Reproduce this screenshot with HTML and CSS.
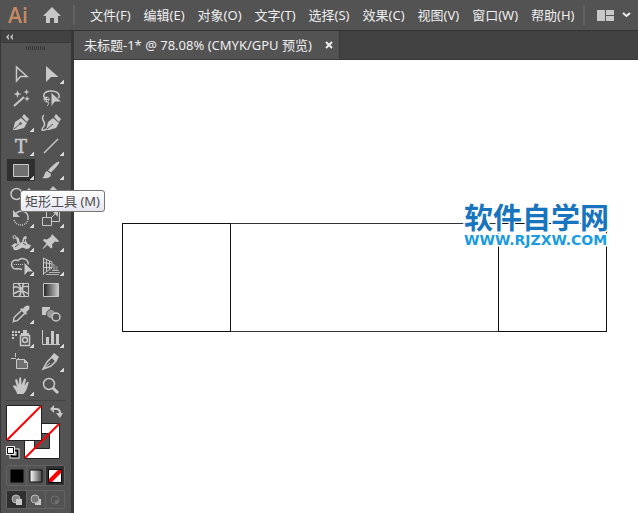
FILE: index.html
```html
<!DOCTYPE html>
<html lang="zh-CN">
<head>
<meta charset="utf-8">
<title>未标题-1</title>
<link rel="stylesheet" href="styles.css">
</head>
<body>
<header class="menubar">
  <span class="brand">Ai</span>
  <button class="home" aria-label="主页"><svg width="18" height="16" viewBox="0 0 18 16"><path class="f" d="M9 0 0 9h3v7h4v-5h4v5h4V9h3Z"/></svg></button>
  <nav class="menus">
    <button>文件(F)</button><button>编辑(E)</button><button>对象(O)</button><button>文字(T)</button><button>选择(S)</button><button>效果(C)</button><button>视图(V)</button><button>窗口(W)</button><button>帮助(H)</button>
  </nav>
  <button class="workspace" aria-label="排列文档"><svg width="35" height="12" viewBox="0 0 35 12"><path class="f" d="M0 1h8v11H0zM9 1h8v5H9zM9 7h8v5H9z"/><path d="m26 4 3.500 3L33 4" fill="none" stroke="#eee" stroke-width="2"/></svg></button>
</header>
<div class="body">
  <aside class="panel">
    <button class="collapse" aria-label="折叠"><svg width="8" height="6" viewBox="0 0 8 6"><path class="f" d="M3 0v2L2 3l1 1v2L0 3ZM7 0v2L6 3l1 1v2L4 3Z"/></svg></button>
    <div class="grip"></div>
    <div class="tools">
      <button aria-label="选择"><svg viewBox="0 0 30 24"><path class="s w15" d="M10.500 5v14l4-4.500h6.500Z"/></svg></button>
      <button class="more" aria-label="直接选择"><svg viewBox="0 0 30 24"><path class="f" d="M10 4v16l5-5h7.500Z"/></svg></button>
      <button aria-label="魔棒"><svg viewBox="0 0 30 24"><path class="s w2" d="m8 20 10-9"/><path class="f" d="m11.500 4 1 3 3 1-3 1-1 3-1-3-3-1 3-1zM20.500 3l.8 2.200 2.200.8-2.200.8-.8 2.200-.8-2.200-2.200-.8 2.200-.8zM21 10l.8 2 2.200.8-2.200.8-.8 2.200-.8-2.200-2-.8 2-.8z"/></svg></button>
      <button aria-label="套索"><svg viewBox="0 0 30 24"><path class="s w15" d="M11 14c-6-4-3-9 4-9s10 4 7 8"/><path class="s" d="M10.500 11a2.500 2.500 0 1 0 .1 0M10.500 11v5M8 13.500h5M12 16c1 2 0 3-1 4"/><path class="f edge" d="M15 6v15l4-5h7Z"/></svg></button>
      <button class="more" aria-label="钢笔"><svg viewBox="0 0 30 24"><path class="f" d="m7 20 2-8 6-4 6 5-3 5-8 2ZM16 7l2-3 5 5-2 3Z"/><path class="d" d="m8 19 6-5"/><circle class="hole" cx="14.500" cy="13.500" r="1.200"/></svg></button>
      <button aria-label="曲率"><svg viewBox="0 0 30 24"><path class="f" d="m10 20 2-8 5-4 6 5-3 5-7 2ZM18 7l2-3 5 5-2 3Z"/><path class="d" d="m11 19 6-5"/><path class="s w15" d="M8 5c-5 4 3 7 0 11-1 2-2 2-2 4 2 1 3 0 4-1"/></svg></button>
      <button class="more" aria-label="文字"><svg viewBox="0 0 30 24"><text x="15" y="19" text-anchor="middle" class="type">T</text></svg></button>
      <button class="more" aria-label="直线段"><svg viewBox="0 0 30 24"><path class="s w15" d="M8 19 22 5"/></svg></button>
      <button class="more selected" aria-label="矩形工具" aria-describedby="tip"><svg viewBox="0 0 30 24"><path class="plate" d="M7.500 6.500h15v12h-15z"/></svg><span class="tip" id="tip" role="tooltip">矩形工具 (M)</span></button>
      <button class="more" aria-label="画笔"><svg viewBox="0 0 30 24"><path class="f" d="M23 3.500c2 1-5 8-8 11l-3-2c3-4 9-9 11-9ZM11 13l4 3c0 4-4 5-9 4 3-1 2-6 5-7Z"/></svg></button>
      <button class="more" aria-label="Shaper"><svg viewBox="0 0 30 24"><circle class="s w15" cx="10.500" cy="12" r="5.500"/><path class="f" d="m15 14 8-8 2 2-8 8Z"/></svg></button>
      <button class="more" aria-label="橡皮擦"><svg viewBox="0 0 30 24"><path class="f" d="m17 4 7 7-7 9H9l-3-3Z"/></svg></button>
      <button class="more" aria-label="旋转"><svg viewBox="0 0 30 24"><path class="s w15" d="M9 8c6-6 14-2 13 5"/><path class="s w15 dots" d="M22 13c-1 8-13 8-14 0"/><path class="f" d="M7 4v7h7Z"/></svg></button>
      <button class="more" aria-label="比例缩放"><svg viewBox="0 0 30 24"><path class="s" d="M10.500 11.500v-6h13v10h-8M6.500 11.500h9v8h-9zM15 12l5-5"/><path class="f" d="M17 6h5v5Z"/></svg></button>
      <button class="more" aria-label="宽度"><svg viewBox="0 0 30 24"><circle class="s" cx="8.500" cy="7" r="1.500"/><path class="f" d="M10 7c3 0 3 2 4 6l2-1c1-3 1-6 4-6l1 2c-2 1-1 3 0 5 1 1 2 2 4 2-1 4-4 5-7 3-3-1-4 2-7 2-3 1-4-1-4-3l-2-1 4-3 2 1c1-2-1-4-1-7Z"/><path class="d" d="m9 17 4-3M17 13l3 2M19 9l-1 3"/></svg></button>
      <button class="more" aria-label="操控变形"><svg viewBox="0 0 30 24"><path class="f" d="m16 4 7 7-1 1-3-.5-3 3 .5 3-1.500 1-3.500-3.500L7 19l-.5-.5 4-5L7 10.500l1-1.500 3 .5 4-3Z"/></svg></button>
      <button class="more" aria-label="形状生成器"><svg viewBox="0 0 30 24"><path class="s w15" d="M12 14.500a4.500 4.500 0 1 1 0-8c4-4 11-1 10 4M12 14.500l4 1"/><path class="s dots" d="M8 10.500h12"/><path class="f edge" d="M18 8v14l4-4h6Z"/></svg></button>
      <button class="more" aria-label="透视网格"><svg viewBox="0 0 30 24"><path class="s" d="M7.500 4v17M7 4l9 4v6l-9 6M10.500 6v11M13.500 7v8M7 8.500l9 1.500M7 13.500h9"/><path class="city" d="M18 10v6M20.500 12v4"/><path class="floor" d="M16 16.500h7M13 18.500h11M10 20.500h13"/></svg></button>
      <button aria-label="网格"><svg viewBox="0 0 30 24"><path class="s" d="M7.500 5.500h15v13h-15z"/><path class="s w15" d="M12 5c4 5 4 9 1 14M18 5c-3 4-1 10 1 14M7 10c4-3 7 1 7 1s4-4 9-2M7 16l6-3c4 0 7 1 10 3"/></svg></button>
      <button aria-label="渐变"><svg viewBox="0 0 30 24"><defs><linearGradient id="g"><stop stop-color="#222"/><stop offset="1" stop-color="#ccc"/></linearGradient></defs><path d="M7.500 5.500h15v13h-15z" fill="url(#g)" stroke="#c8c8c8"/></svg></button>
      <button class="more" aria-label="吸管"><svg viewBox="0 0 30 24"><path class="s w15" d="m16 8 3 3-7 7c-2 2-3 .5-4.500 1.500C8 17 7 16 9 14.500Z"/><path class="f" d="m14 7 2-1 1 1c2-4 5-4 6-3s1 4-3 6l1 1-1 2Z"/></svg></button>
      <button aria-label="混合"><svg viewBox="0 0 30 24"><path class="f" d="M6 5h8v8H6z"/><circle cx="15" cy="12" r="4.500" fill="#999" stroke="#535353"/><circle cx="20" cy="15" r="4" fill="#535353" stroke="#c8c8c8" stroke-width="1.500"/></svg></button>
      <button class="more" aria-label="符号喷枪"><svg viewBox="0 0 30 24"><path class="f" d="M6 5h2v2H6zM9 5h2v2H9zM12 5h2v2h-2zM6 8h2v2H6zM9 8h2v2H9zM6 11h2v2H6zM17 4h4v3h2v2h-8V7h2z"/><path class="s w15" d="M14.500 9.500h9v10h-9z"/><circle class="s w15" cx="19" cy="14" r="2.500"/></svg></button>
      <button class="more" aria-label="柱形图"><svg viewBox="0 0 30 24"><path class="s" d="M6.500 4v14.500H24"/><path class="f" d="M10 11h3v7h-3zM15 5h3v13h-3zM20 8h3v10h-3z"/></svg></button>
      <button aria-label="画板"><svg viewBox="0 0 30 24"><path class="s" d="M5 8.500h5M9.500 3v4M12 8.500h1"/><path class="plate" d="M10.500 9.500h8l3 3v6h-11z"/><path class="f" d="M18 9v4h4Z"/></svg></button>
      <button class="more" aria-label="切片"><svg viewBox="0 0 30 24"><path class="s w15" d="m7 19 4-7 5-5 4 4-5 5Z"/><path class="f" d="m15 7 3-4 5 4-3 5Z"/><path class="s" d="m8 18 6-5"/></svg></button>
      <button class="more" aria-label="抓手"><svg viewBox="0 0 30 24"><path class="f" d="M11 20c0-3-3-5-4-8 1-1 2-1 4 1L9 6c1-1 2-1 2.500 0L13 11l.2-7c.5-1 2-1 2 0l.3 7L18 5c.5-1 2-.5 2 .5L18.500 12 21 8c1-.7 2 0 1.500 1-1 4-2 8-5 11Z"/></svg></button>
      <button aria-label="缩放"><svg viewBox="0 0 30 24"><circle class="s w15" cx="13" cy="10" r="5.500"/><path class="s w3" d="m17 14 5 5"/></svg></button>
    </div>
    <div class="colors">
      <svg width="60" height="56" viewBox="0 0 60 56" role="img" aria-label="填色和描边">
        <path d="M18.500 18.500h35v35h-35z" fill="#fff" stroke="#222"/><path d="M28.500 28.500h15v15h-15z" fill="#535353" stroke="#222"/><path d="m19 53 34-34" stroke="#f00" stroke-width="2"/>
        <path d="M.5.500h35v35H.5z" fill="#fff" stroke="#222"/><path d="m1 35 34-34" stroke="#f00" stroke-width="2"/>
        <path d="M48 4h2q4 0 4 4" fill="none" stroke="#c8c8c8" stroke-width="2"/><path class="f" d="M48 0v8l-4-4ZM50 8h7l-3 5Z"/>
        <path d="M5.500 45.500h6v6h-6z" fill="none" stroke="#eee" stroke-width="4"/><path d="M5.500 45.500h6v6h-6z" fill="none" stroke="#000" stroke-width="2"/><path d="M.5 41.500h8v8h-8z" fill="#fff" stroke="#eee"/><path d="M1.500 42.500h6v6h-6z" fill="#fff" stroke="#000"/>
      </svg>
    </div>
    <div class="segments">
      <button aria-label="颜色"><svg viewBox="0 0 14 14"><path d="M.5.500h13v13H.5z"/></svg></button>
      <button aria-label="渐变色"><svg viewBox="0 0 14 14"><defs><linearGradient id="h"><stop stop-color="#fff"/><stop offset="1" stop-color="#444"/></linearGradient></defs><path d="M1 1h12v12H1z" fill="url(#h)" stroke="#111"/></svg></button>
      <button class="on" aria-label="无"><svg viewBox="0 0 14 14"><path d="M.5.500h13v13H.5z" fill="#fff" stroke="#000"/><path d="M1 10 10 1h3v3l-9 9H1Z" fill="#f00"/></svg></button>
    </div>
    <div class="segments modes">
      <button class="on" aria-label="正常绘图"><svg viewBox="0 0 14 14"><circle cx="6" cy="6" r="4" fill="#888" stroke="#bbb"/><path class="f" d="M6 6h6v6H6z"/></svg></button>
      <button aria-label="背面绘图"><svg viewBox="0 0 14 14"><path class="f" d="M6 6h6v6H6z"/><circle cx="6" cy="6" r="4" fill="#777" stroke="#bbb"/></svg></button>
      <button aria-label="内部绘图" disabled><svg viewBox="0 0 14 14"><circle cx="7" cy="7" r="4" fill="none" stroke="#707070"/><path d="M7 7h3v3H7z" fill="#707070"/></svg></button>
    </div>
  </aside>
  <main class="document">
    <div class="tabs"><div class="tab"><span>未标题-1* @ 78.08% (CMYK/GPU 预览)</span><button class="close" aria-label="关闭"><svg width="8" height="8" viewBox="0 0 8 8"><path d="m1 1 6 6M7 1 1 7" stroke="#eee" stroke-width="2"/></svg></button></div></div>
    <div class="canvas">
      <svg class="art" width="486" height="110" viewBox="0 0 486 110"><path d="M.5.500h484v108H.5z" fill="none" stroke="#333"/><path d="M.5.500h108v108H.5zM376.500.500h108v108h-108z" fill="none" stroke="#111"/></svg>
      <div class="watermark"><span class="site">软件自学网</span><span class="url">WWW.RJZXW.COM</span></div>
    </div>
  </main>
</div>
</body>
</html>
```
FILE: styles.css
```css
* { box-sizing: border-box; }
body {
  margin: 0;
  height: 100vh;
  display: flex;
  flex-direction: column;
  overflow: hidden;
  background: #535353;
  color: #eee;
  font: 13px/18px "Noto Sans", "Noto Sans CJK SC", sans-serif;
}
button {
  display: flex;
  align-items: center;
  justify-content: center;
  padding: 0;
  border: 0;
  background: none;
  color: inherit;
  font: inherit;
  white-space: nowrap;
}
svg { display: block; flex: none; }
.f { fill: #c8c8c8; }
.s { fill: none; stroke: #c8c8c8; }
.d { fill: none; stroke: #535353; }
.w15 { stroke-width: 1.5; }
.w2 { stroke-width: 2; }
.w3 { stroke-width: 3; }
.edge { stroke: #535353; }
.hole { fill: #535353; }
.plate { fill: #707070; stroke: #c8c8c8; }
.dots { stroke-dasharray: 1 1; }
.city { stroke: #858585; stroke-width: 2; }
.floor { stroke: #b0b0b0; }

.menubar {
  display: flex;
  align-items: center;
  height: 31px;
  flex: none;
  border-bottom: 1px solid #333;
}
.brand {
  width: 43px;
  padding-left: 8px;
  color: #c68a63;
  font: 600 21px/28px "Open Sans", sans-serif;
}
.menus {
  display: flex;
  align-items: center;
  gap: 13px;
  height: 20px;
  margin-left: 12px;
  padding: 0 9px 0 15px;
  border: solid #626262;
  border-width: 0 2px;
}
.workspace { margin-left: 12px; }

.body { display: flex; flex: 1; min-height: 0; }
.panel {
  width: 74px;
  flex: none;
  border: solid #383838;
  border-width: 0 3px 0 1px;
}
.collapse {
  width: 100%;
  height: 12px;
  justify-content: flex-start;
  padding-left: 5px;
  background: #424242;
  border-bottom: 1px solid #383838;
}
.grip {
  width: 20px;
  height: 4px;
  margin: 3px 0 12px 25px;
  background: repeating-linear-gradient(90deg, #383838 0 1px, #535353 1px 2px);
}
.tools {
  display: grid;
  grid-template-columns: repeat(2, 30px);
  grid-auto-rows: 24px;
  margin: 0 5px;
  padding-bottom: 2px;
  border-bottom: 1px solid #454545;
}
.tools button { position: relative; }
.tools svg { width: 30px; height: 24px; }
.type { font: 18px "DejaVu Serif", serif; fill: #c8c8c8; stroke: #c8c8c8; stroke-width: 0.5; }
.more::after {
  content: "";
  position: absolute;
  right: 2px;
  bottom: 2px;
  width: 4px;
  height: 4px;
  background: linear-gradient(135deg, transparent 50%, #d8d8d8 50%);
}
.selected svg {
  background: linear-gradient(#303030, #303030) center / 28px 22px no-repeat;
}
.tip {
  position: absolute;
  z-index: 1;
  top: 32px;
  left: 14px;
  padding: 1px 4px;
  border: 1px solid #767676;
  border-radius: 3px;
  background: linear-gradient(#fff, #e4e5f0);
  color: #4c4c4c;
}
.colors { margin: 4px 5px 0; }
.segments {
  display: grid;
  grid-template-columns: repeat(3, 1fr);
  width: 59px;
  height: 21px;
  margin: 4px 5px;
  border: 1px solid #636363;
  border-radius: 2px;
}
.segments button + button { border-left: 1px solid #636363; }
.segments .on { background: #303030; }
.segments svg { width: 14px; height: 14px; }
.modes { height: 19px; }

.document {
  display: flex;
  flex-direction: column;
  flex: 1;
  min-width: 0;
}
.tabs {
  display: flex;
  height: 29px;
  flex: none;
  background: #424242;
  border-bottom: 1px solid #383838;
}
.tab {
  display: flex;
  align-items: center;
  gap: 13px;
  padding: 0 6px 0 10px;
  background: #535353;
  border-right: 1px solid #383838;
  white-space: nowrap;
}
.canvas {
  position: relative;
  flex: 1;
  background: #fff;
}
.art { position: absolute; left: 48px; top: 163px; }
.watermark {
  position: absolute;
  left: 390px;
  top: 139px;
  display: flex;
  flex-direction: column;
  white-space: nowrap;
  paint-order: stroke;
  -webkit-text-stroke: 3px #fff;
}
.site {
  color: #1874bd;
  font: 700 29px/34px "Noto Sans CJK SC", sans-serif;
}
.url {
  color: #1b9be0;
  font: 700 14px/14px "DejaVu Sans", sans-serif;
}
```
